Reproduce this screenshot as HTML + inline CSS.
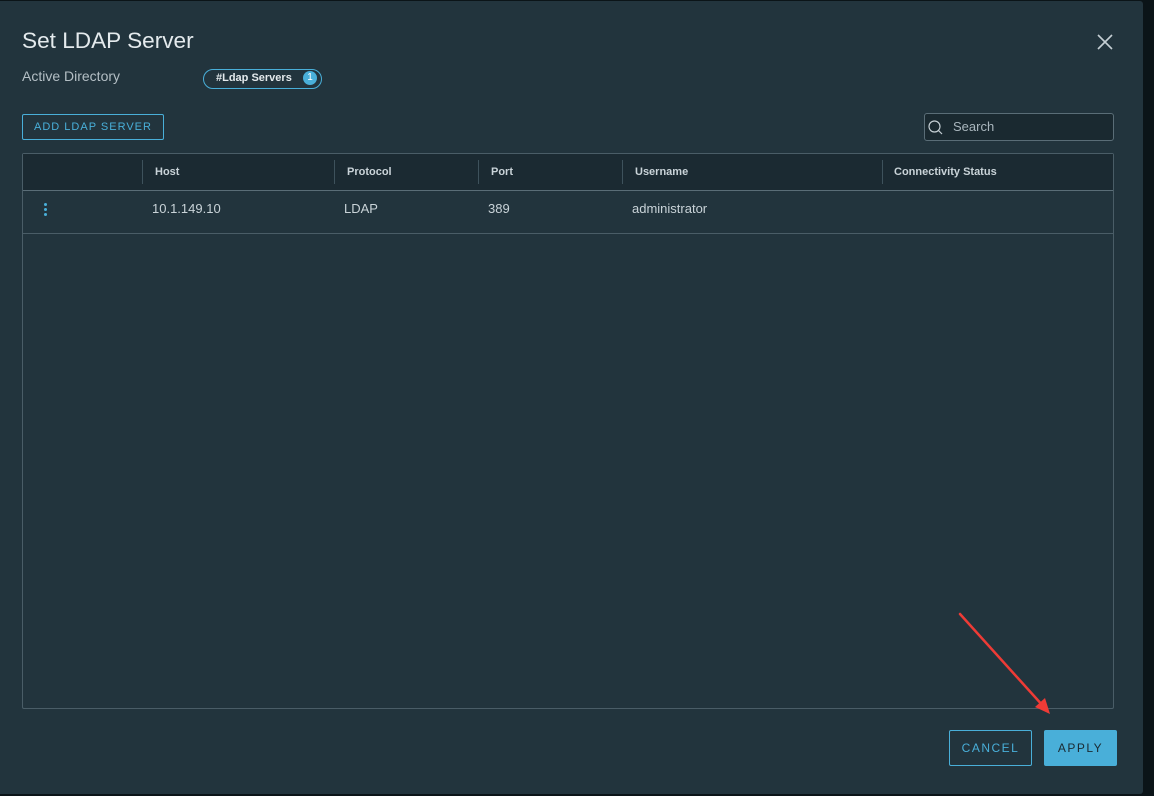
<!DOCTYPE html>
<html><head><style>
body{margin:0;width:1154px;height:796px;background:#0b1418;font-family:"Liberation Sans",sans-serif;position:relative;overflow:hidden}
.m{position:absolute;left:0;top:1px;width:1143px;height:793px;background:#22343d;border-radius:0 3px 3px 0}
.a{position:absolute}
.th{font-size:11px;font-weight:bold;color:#c9d3d8}
.td{font-size:13px;color:#c9d3d8}
.sep{position:absolute;top:6px;width:1px;height:24px;background:#3e525c}
</style></head><body>
<div class="m">
<div class="a" style="left:22px;top:27px;font-size:22.6px;color:#e4eaed">Set LDAP Server</div>
<svg class="a" style="left:1097px;top:33px" width="16" height="16"><path d="M1 1L15 15M15 1L1 15" stroke="#c5cfd4" stroke-width="1.6"/></svg>
<div class="a" style="left:22px;top:67px;font-size:14px;color:#b4bfc5">Active Directory</div>
<div class="a" style="left:203px;top:68px;width:119px;height:20px;border:1px solid #49afd9;border-radius:11px;box-sizing:border-box"></div>
<div class="a" style="left:216px;top:71px;font-size:11px;font-weight:bold;color:#e4eaed">#Ldap Servers</div>
<div class="a" style="left:303px;top:70px;width:14px;height:14px;border-radius:50%;background:#49afd9;color:#fff;font-size:10px;text-align:center;line-height:14px">1</div>
<div class="a" style="left:22px;top:113px;width:142px;height:26px;border:1px solid #49afd9;border-radius:2px;box-sizing:border-box;color:#49afd9;font-size:11px;letter-spacing:1px;text-align:center;line-height:24px">ADD LDAP SERVER</div>
<div class="a" style="left:924px;top:112px;width:190px;height:28px;border:1px solid #5a6d77;border-radius:3px;box-sizing:border-box;background:#1a2930"></div>
<svg class="a" style="left:927px;top:118px" width="18" height="18"><circle cx="7.5" cy="7.5" r="5.5" fill="none" stroke="#c5cfd4" stroke-width="1.2"/><path d="M11.5 11.5L15 15" stroke="#c5cfd4" stroke-width="1.2"/></svg>
<div class="a" style="left:953px;top:118px;font-size:13px;color:#a9b6bd">Search</div>
<div class="a" style="left:22px;top:152px;width:1092px;height:556px;border:1px solid #4a5d67;box-sizing:border-box;border-radius:2px">
 <div class="a" style="left:0;top:0;width:1090px;height:36px;background:#1b2a32;border-bottom:1px solid #5a6d77"></div>
 <div class="sep" style="left:119px"></div><div class="sep" style="left:311px"></div><div class="sep" style="left:455px"></div><div class="sep" style="left:599px"></div><div class="sep" style="left:859px"></div>
 <div class="a th" style="left:132px;top:12px">Host</div>
 <div class="a th" style="left:324px;top:12px">Protocol</div>
 <div class="a th" style="left:468px;top:12px">Port</div>
 <div class="a th" style="left:612px;top:12px">Username</div>
 <div class="a th" style="left:871px;top:12px">Connectivity Status</div>
 <div class="a" style="left:21px;top:49px;width:3px;height:3px;background:#49afd9;border-radius:50%;box-shadow:0 5px 0 #49afd9,0 10px 0 #49afd9"></div>
 <div class="a td" style="left:129px;top:47px">10.1.149.10</div>
 <div class="a td" style="left:321px;top:47px">LDAP</div>
 <div class="a td" style="left:465px;top:47px">389</div>
 <div class="a td" style="left:609px;top:47px">administrator</div>
 <div class="a" style="left:0;top:79px;width:1090px;height:1px;background:#4a5d67"></div>
</div>
<div class="a" style="left:949px;top:729px;width:83px;height:36px;border:1px solid #49afd9;border-radius:2px;box-sizing:border-box;color:#49afd9;font-size:12px;letter-spacing:1.5px;text-align:center;line-height:34px">CANCEL</div>
<div class="a" style="left:1044px;top:729px;width:73px;height:36px;background:#49afd9;border-radius:2px;color:#1b2a32;font-size:12px;letter-spacing:1.5px;text-align:center;line-height:36px">APPLY</div>
<svg class="a" style="left:950px;top:605px" width="110" height="115"><path d="M10 8L94 101" stroke="#ee3b36" stroke-width="2.5" stroke-linecap="round"/><path d="M100 108L85 101L95 92Z" fill="#ee3b36"/></svg>
</div>
</body></html>
